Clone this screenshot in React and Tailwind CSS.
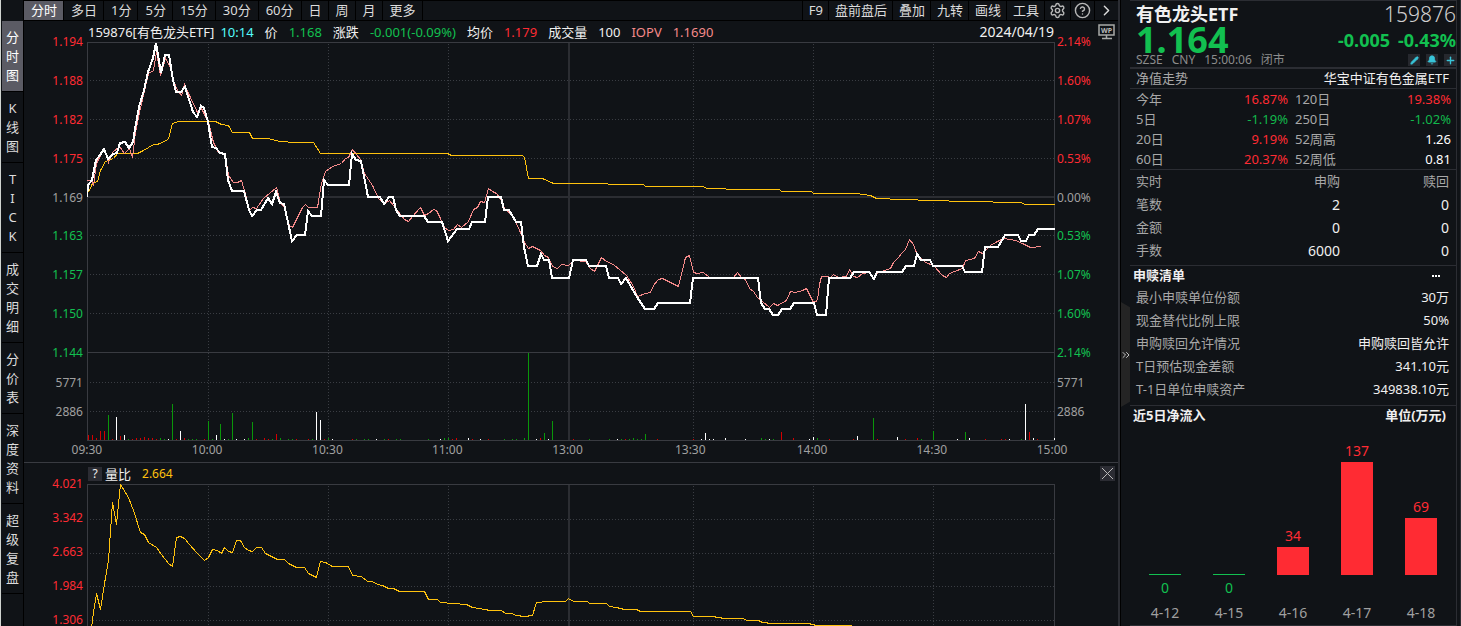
import React, { useState } from 'react'
import { Settings, CircleQuestionMark, ChevronRight, ChevronsRight, Pencil, Bell, Plus } from 'lucide-react'

const periods = ['分时', '多日', '1分', '5分', '15分', '30分', '60分', '日', '周', '月', '更多'];
const tools = ['F9', '盘前盘后', '叠加', '九转', '画线', '工具'];
const sideTabs = ['分时图', 'K线图', 'TICK', '成交明细', '分价表', '深度资料', '超级复盘'];

const priceTicks = ['1.194', '1.188', '1.182', '1.175', '1.169', '1.163', '1.157', '1.150', '1.144'];
const percentTicks = ['2.14%', '1.60%', '1.07%', '0.53%', '0.00%', '0.53%', '1.07%', '1.60%', '2.14%'];
const volumeTicks = ['5771', '2886'];
const ratioTicks = ['4.021', '3.342', '2.663', '1.984', '1.306'];
const times = ['09:30', '10:00', '10:30', '11:00', '13:00', '13:30', '14:00', '14:30', '15:00'];
const timeLines = [208, 328, 448, 693, 813, 933];

// 价格
const priceLine = '87,197 88,185 92,180 96,160 100,155 104,149 108,159 113,154 117,153 120,143 125,142 129,148 133,142 135,129 139,107 144,90 148,72 153,58 156,43 161,73 165,55 169,55 173,80 176,92 181,92 185,87 193,112 197,117 201,106 204,108 208,122 212,147 216,148 220,153 225,154 228,180 232,191 244,191 249,210 252,216 257,210 261,210 268,198 272,204 276,192 280,203 284,204 292,241 297,235 305,235 308,211 312,216 321,216 324,180 328,185 349,185 352,154 356,160 361,161 368,197 380,197 384,204 389,197 393,197 396,210 400,216 424,216 428,222 442,222 448,241 457,229 469,229 472,222 485,222 488,197 501,197 504,210 509,210 516,222 521,222 524,247 528,266 537,266 541,254 544,260 549,260 552,278 569,278 573,260 586,260 589,266 606,266 609,278 618,278 621,284 626,278 637,297 645,309 654,309 658,303 690,303 693,278 758,278 761,303 765,309 769,309 773,315 778,315 782,309 790,309 794,303 814,303 817,315 826,315 829,278 850,278 854,272 869,272 874,279 877,272 902,272 906,266 914,266 917,254 921,260 930,260 933,266 962,266 965,272 982,272 985,247 998,247 1005,235 1018,235 1021,241 1026,241 1029,235 1034,235 1038,229 1055,229';
// 均价
const averageLine = '88,192 92,183 97,181 100,170 105,161 113,158 117,153 137,153 143,150 153,144 157,144 168,139 172,123 178,121 215,121 221,124 228,125 232,132 249,132 252,138 267,138 280,141 295,142 313,142 320,153 447,153 451,155 522,155 524,157 528,178 542,178 553,183 571,183 643,184 645,186 703,186 706,188 744,189 779,189 781,191 811,191 813,193 856,193 870,195 876,198 903,199 932,200 964,201 1020,202 1025,204 1055,204';
// IOPV
const iopvLine = '87,180 92,181 93,185 96,163 100,155 104,149 108,162 112,152 119,146 124,153 129,148 132,157 135,132 139,112 148,73 153,70 156,52 160,75 165,58 169,65 173,80 177,90 181,95 184,84 189,95 197,112 201,108 208,122 213,142 218,152 225,155 228,175 233,182 237,182 241,180 244,190 249,210 252,207 256,208 263,198 276,187 280,202 284,207 289,225 292,227 302,207 305,204 308,207 317,207 321,183 325,171 332,166 341,163 345,158 348,157 352,149 360,159 364,173 372,185 378,198 384,203 389,200 397,210 404,219 408,221 412,216 420,207 424,215 428,213 433,209 436,210 440,218 444,227 448,230 453,229 457,224 461,227 468,221 473,209 477,207 480,201 484,202 488,188 492,191 496,193 501,200 504,208 512,215 520,232 524,242 528,248 532,246 540,250 544,255 548,257 552,266 557,268 561,264 568,265 573,260 585,261 590,268 594,271 601,257 606,261 613,264 626,275 633,286 637,296 645,293 650,292 653,285 658,279 662,278 678,286 685,257 689,255 693,272 697,273 703,272 709,277 733,277 737,272 741,277 745,279 749,288 753,291 757,297 762,301 769,307 773,303 777,305 786,300 790,291 795,292 802,290 806,288 813,302 817,300 819,284 821,276 827,276 830,277 833,274 838,277 846,276 849,269 853,276 857,277 862,273 869,272 873,277 878,272 890,268 893,262 897,258 902,252 905,249 909,239 913,244 917,255 925,262 933,265 942,275 946,277 949,273 962,268 965,260 974,258 978,251 982,253 990,245 997,241 1003,238 1015,240 1022,243 1030,247 1041,246';
// 量比
const ratioLine = '91,628 93,612 96,593 100,609 104,583 108,560 112,502 116,524 120,484 128,497 133,510 140,532 144,534 148,542 156,547 161,554 168,563 172,566 176,537 180,536 184,538 189,544 197,553 204,560 208,557 212,549 217,550 221,553 224,547 228,551 232,552 236,540 240,540 244,547 248,550 252,551 256,547 261,547 265,553 277,559 284,559 288,563 296,567 304,567 308,573 316,577 320,561 325,562 332,566 348,566 352,575 361,576 367,581 372,581 377,584 382,585 388,588 393,588 399,591 424,591 428,599 437,599 440,602 466,604 472,607 485,609 489,610 501,610 505,613 511,613 516,615 524,616 532,615 536,602 547,601 565,601 568,598 573,601 587,601 589,603 606,603 609,606 616,607 624,609 636,609 640,611 690,611 693,616 712,616 724,618 743,618 746,620 758,620 762,622 772,623 808,623 816,625 851,625';

// 成交量：位置, 高度
const volumes = {
    red: [[88, 5], [92, 5], [96, 2], [100, 9], [104, 9], [112, 1], [120, 4], [132, 1], [136, 2], [140, 2], [144, 3], [148, 2], [152, 2], [156, 1], [176, 1], [184, 2], [204, 1], [256, 1], [264, 2], [268, 1], [276, 6], [296, 1], [308, 1], [324, 1], [352, 1], [388, 1], [452, 1], [456, 2], [472, 1], [488, 1], [540, 2], [573, 1], [625, 1], [657, 1], [693, 1], [781, 8], [793, 2], [829, 1], [853, 1], [877, 1], [905, 1], [917, 2], [985, 1], [1001, 1], [1005, 1], [1029, 8], [1037, 1]],
    green: [[108, 25], [128, 1], [160, 2], [164, 1], [172, 36], [188, 1], [192, 1], [196, 1], [208, 19], [212, 1], [220, 16], [228, 1], [232, 27], [248, 2], [252, 18], [272, 1], [280, 2], [288, 1], [292, 1], [312, 1], [328, 2], [356, 1], [364, 1], [368, 1], [384, 1], [396, 1], [400, 1], [428, 1], [444, 2], [448, 2], [504, 1], [512, 1], [516, 1], [524, 2], [528, 87], [544, 7], [552, 19], [589, 1], [609, 1], [621, 1], [629, 1], [633, 2], [637, 1], [641, 1], [645, 6], [761, 2], [765, 1], [773, 1], [817, 2], [873, 22], [921, 1], [933, 9], [965, 8], [1021, 1]],
    white: [[116, 23], [124, 5], [168, 1], [180, 9], [216, 5], [224, 1], [236, 1], [244, 1], [316, 28], [320, 20], [332, 1], [376, 1], [440, 1], [468, 2], [480, 1], [536, 1], [548, 1], [617, 1], [701, 1], [705, 7], [709, 1], [713, 1], [725, 2], [745, 1], [769, 1], [809, 1], [813, 3], [857, 4], [897, 3], [957, 1], [969, 2], [1009, 1], [1025, 36], [1033, 2], [1054, 2]],
};
const volumeColors = { red: '#d40000', green: '#0a960a', white: '#ffffff' };

const trends = [
    ['今年', '16.87%', 'text-[#ff2b33]', '120日', '19.38%', 'text-[#ff2b33]'],
    ['5日', '-1.19%', 'text-[#12b84c]', '250日', '-1.02%', 'text-[#12b84c]'],
    ['20日', '9.19%', 'text-[#ff2b33]', '52周高', '1.26', 'text-white'],
    ['60日', '20.37%', 'text-[#ff2b33]', '52周低', '0.81', 'text-white'],
];
const realtime = [['笔数', '2', '0'], ['金额', '0', '0'], ['手数', '6000', '0']];
const redeemList = [
    ['最小申赎单位份额', '30万'],
    ['现金替代比例上限', '50%'],
    ['申购赎回允许情况', '申购赎回皆允许'],
    ['T日预估现金差额', '341.10元'],
    ['T-1日单位申赎资产', '349838.10元'],
];
const inflows = [
    { date: '4-12', value: 0 },
    { date: '4-15', value: 0 },
    { date: '4-16', value: 34 },
    { date: '4-17', value: 137 },
    { date: '4-18', value: 69 },
];

const tickColor = (i) => (i < 4 ? 'text-[#ff2b33]' : i === 4 ? 'text-[#a0a0a0]' : 'text-[#12c050]');

function TickColumn({ ticks, align }) {
    return (
        <div className={`-mt-2 w-[63px] shrink-0 text-xs leading-4 ${align}`}>
            <ul className="flex h-[327px] flex-col justify-between">
                {ticks.map((t, i) => <li key={i} className={tickColor(i)}>{t}</li>)}
            </ul>
            <ul className="flex flex-col gap-[13px] pt-3.5 text-[#a0a0a0]">
                {volumeTicks.map((t) => <li key={t}>{t}</li>)}
            </ul>
        </div>
    )
}

function Grid({ top, bottom, rows }) {
    return (
        <>
            <g stroke="#3a3d43" strokeDasharray="1 2">
                {rows.map((y) => <line key={y} x1="89.5" x2="1054" y1={y} y2={y} />)}
                {timeLines.map((x) => <line key={x} x1={x} x2={x} y1={top + 1.5} y2={bottom} />)}
            </g>
            <rect x="567.5" y={top} width="2" height={bottom - top} fill="#2b2d32" stroke="none" />
        </>
    )
}

function PriceChart() {
    return (
        <svg viewBox="87 42 968 399" preserveAspectRatio="none" className="h-[399px] min-w-0 flex-1" fill="none" shapeRendering="crispEdges" role="img" aria-label="分时">
            <g transform="translate(0.5 0.5)">
                <Grid top={42} bottom={440} rows={[80, 119, 158, 235, 274, 313, 382, 411]} />
                <line x1="87" x2="1054" y1="196.5" y2="196.5" stroke="#2b2d32" strokeWidth="2" />
                <path d="M87 352H1054M87 42H1054V440H87Z" stroke="#393b41" />
                {Object.keys(volumes).map((color) => (
                    <g key={color} stroke={volumeColors[color]}>
                        {volumes[color].map(([x, h]) => <line key={x} x1={x} x2={x} y1={439.5 - h} y2="439.5" />)}
                    </g>
                ))}
                <polyline points={averageLine} stroke="#ffc20e" />
                <polyline points={iopvLine} stroke="#f58a8a" />
            </g>
            <polyline points={priceLine} stroke="#ffffff" strokeWidth="2" />
        </svg>
    )
}

function RatioChart() {
    return (
        <svg viewBox="87 484 968 142" preserveAspectRatio="none" className="h-[142px] min-w-0 flex-1" fill="none" shapeRendering="crispEdges" role="img" aria-label="量比">
            <g transform="translate(0.5 0.5)">
                <Grid top={484} bottom={626} rows={[519, 553, 586, 620]} />
                <path d="M87 628V484H1054V628" stroke="#393b41" />
                <polyline points={ratioLine} stroke="#ffc20e" />
            </g>
        </svg>
    )
}

function TopBar({ period, setPeriod }) {
    return (
        <header className="flex h-[21px] items-stretch justify-between border-y border-black text-[13px] leading-[19px] text-[#dcdcdc]">
            <nav className="flex">
                {periods.map((p) => (
                    <button
                        key={p}
                        onClick={() => setPeriod(p)}
                        className={`border-r border-black pl-[7px] ${p.length > 2 ? 'pr-[7px]' : 'pr-1.5'} ${p === period ? 'bg-[#5b5b64] text-white' : ''}`}
                    >
                        {p}
                    </button>
                ))}
            </nav>
            <div className="flex">
                {tools.map((t, i) => (
                    <button key={t} className={`border-r border-black pr-[5px] pl-1.5 ${i === 0 ? 'border-l' : ''}`}>{t}</button>
                ))}
                <button aria-label="设置" className="border-r border-black px-1 text-[#b8b8b8]"><Settings size={17} strokeWidth={2} /></button>
                <button aria-label="帮助" className="border-r border-black px-[3px] text-[#b8b8b8]"><CircleQuestionMark size={17} strokeWidth={2} /></button>
                <button aria-label="展开" className="px-[3px]"><ChevronRight size={17} strokeWidth={2} /></button>
            </div>
        </header>
    )
}

function ChartHeader() {
    return (
        <div className="flex h-[21px] items-center pl-16 text-[13px] leading-5 whitespace-nowrap text-[#f0f0f0]">
            <span>159876[有色龙头ETF]</span>
            <div className="ml-1.5 flex gap-[11px]">
                <span className="text-[#54fcfc]">10:14</span>
                <span>价</span>
                <span className="text-[#12c050]">1.168</span>
                <span>涨跌</span>
                <span className="text-[#12c050]">-0.001(-0.09%)</span>
                <span>均价</span>
                <span className="text-[#ff2b33]">1.179</span>
                <span>成交量</span>
                <span>100</span>
                <span className="text-[#f58a8a]">IOPV</span>
                <span className="text-[#f58a8a]">1.1690</span>
            </div>
            <span className="ml-auto text-sm leading-5">2024/04/19</span>
            <button aria-label="WP" className="mr-0.5 ml-11">
                <svg width="18" height="16" viewBox="0 0 18 16" fill="none" stroke="#a8aaa8">
                    <rect x="1" y="1" width="15" height="10" strokeWidth="1.5" />
                    <path d="M8.5 11v3M4 14.5h10" strokeWidth="1.5" />
                    <text x="8.5" y="9" textAnchor="middle" fontSize="7" fontWeight="700" fill="#b8bab8" stroke="none">WP</text>
                </svg>
            </button>
        </div>
    )
}

function QuoteHeader() {
    return (
        <div className="border-b-2 border-[#2b2d33] pl-1.5">
            <div className="flex h-[25px] items-center justify-between">
                <h1 className="text-lg leading-6 font-bold text-[#f0f0f0]">有色龙头ETF</h1>
                <span className="text-[21px] leading-6 font-light text-[#d0d0d0]">159876</span>
            </div>
            <div className="flex h-[27px] items-center justify-between font-bold text-[#12c050]">
                <span className="text-4xl leading-7">1.164</span>
                <div className="flex gap-2 text-lg leading-6">
                    <span>-0.005</span>
                    <span>-0.43%</span>
                </div>
            </div>
            <div className="flex h-3.5 items-center justify-between text-xs leading-3 text-[#8c8c8c]">
                <div className="flex gap-[9px]">
                    <span>SZSE</span>
                    <span>CNY</span>
                    <span>15:00:06</span>
                    <span>闭市</span>
                </div>
                <div className="flex gap-1.5 text-[#38c4d8]">
                    <button aria-label="编辑" className="flex size-3 items-center justify-center bg-[#26282e]"><Pencil size={9} fill="currentColor" /></button>
                    <button aria-label="提醒" className="flex size-3 items-center justify-center bg-[#26282e]"><Bell size={10} fill="currentColor" /></button>
                    <button aria-label="添加" className="flex size-3 items-center justify-center bg-[#26282e]"><Plus size={11} strokeWidth={3} /></button>
                </div>
            </div>
        </div>
    )
}

function InflowChart() {
    return (
        <section>
            <div className="flex h-5 items-center justify-between pr-2.5 pl-[3px] text-[13px] font-bold text-[#f0f0f0]">
                <h2>近5日净流入</h2>
                <span>单位(万元)</span>
            </div>
            <div className="grid grid-cols-5 border-b border-[#2b2d33] px-[3px] text-center text-sm">
                {inflows.map(({ date, value }) => (
                    <div key={date}>
                        <div className="flex h-[149px] flex-col items-center justify-end">
                            {value > 0 && <span className="leading-[22px] text-[#ff2b33]">{value}</span>}
                            <div
                                className={`w-8 ${value > 0 ? 'bg-[#ff2b33]' : 'bg-[#12c050]'}`}
                                style={{ height: Math.max(1, Math.round(value * 0.825)) }}
                            />
                        </div>
                        <div className="h-[26px] leading-[26px] text-[#12c050]">{value === 0 && value}</div>
                        <div className="leading-6 text-[#a0a0a0]">{date}</div>
                    </div>
                ))}
            </div>
        </section>
    )
}

function QuotePanel() {
    return (
        <aside className="flex w-[343px] shrink-0 border-l-2 border-[#2b2d33]">
            <div className="w-2.5 shrink-0 border-l border-black">
                <button aria-label="收起" className="mt-[302px] flex h-[105px] w-full items-center justify-center bg-[#242424] text-[#c0c0c0] [clip-path:polygon(0_0,100%_5%,100%_95%,0_100%)]">
                    <ChevronsRight size={12} className="shrink-0" />
                </button>
            </div>
            <div className="min-w-0 flex-1 border-t border-[#2b2d33] text-[13px] text-[#a8a8a8]">
                <QuoteHeader />
                <div className="flex h-5 items-center justify-between border-b border-[#2b2d33] pr-[7px] pl-1.5">
                    <h2>净值走势</h2>
                    <span className="text-[#f0f0f0]">华宝中证有色金属ETF</span>
                </div>
                <table className="w-full border-b border-[#2b2d33] leading-5">
                    <tbody>
                        {trends.map(([a, av, ac, b, bv, bc]) => (
                            <tr key={a} className="h-5">
                                <th className="p-0 pl-1.5 text-left font-normal">{a}</th>
                                <td className={`p-0 text-right ${ac}`}>{av}</td>
                                <th className="w-[72px] p-0 pl-[7px] text-left font-normal">{b}</th>
                                <td className={`w-24 p-0 pr-[5px] text-right ${bc}`}>{bv}</td>
                            </tr>
                        ))}
                    </tbody>
                </table>
                <div className="border-b border-[#2b2d33] pb-[3px]">
                    <table className="w-full leading-[23px]">
                        <thead>
                            <tr>
                                <th className="p-0 pl-1.5 text-left font-normal">实时</th>
                                <th className="p-0 text-right font-normal">申购</th>
                                <th className="w-[116px] p-0 pr-[7px] text-right font-normal">赎回</th>
                            </tr>
                        </thead>
                        <tbody>
                            {realtime.map(([name, buy, sell]) => (
                                <tr key={name}>
                                    <th className="p-0 pl-1.5 text-left font-normal">{name}</th>
                                    <td className="p-0 text-right text-sm leading-[23px] text-[#f0f0f0]">{buy}</td>
                                    <td className="p-0 pr-[7px] text-right text-sm leading-[23px] text-[#f0f0f0]">{sell}</td>
                                </tr>
                            ))}
                        </tbody>
                    </table>
                </div>
                <section className="border-b border-[#2b2d33] pb-1">
                    <div className="flex h-5 items-center justify-between pr-4 pl-[3px] font-bold text-[#f0f0f0]">
                        <h2>申赎清单</h2>
                        <button aria-label="更多" className="flex gap-px">
                            <i className="size-0.5 bg-white" />
                            <i className="size-0.5 bg-white" />
                            <i className="size-0.5 bg-white" />
                        </button>
                    </div>
                    <dl className="pr-[7px] pl-1.5 leading-[23px]">
                        {redeemList.map(([name, value]) => (
                            <div key={name} className="flex justify-between">
                                <dt>{name}</dt>
                                <dd className="text-[#f0f0f0]">{value}</dd>
                            </div>
                        ))}
                    </dl>
                </section>
                <InflowChart />
            </div>
            <div className="w-[5px] shrink-0 border-x border-[#2b2d33]" />
        </aside>
    )
}

export default function App() {
    const [period, setPeriod] = useState('分时');
    const [tab, setTab] = useState('分时图');
    const [showRatio, setShowRatio] = useState(true);

    return (
        <div className="flex h-screen overflow-hidden bg-[#101317] font-['Noto_Sans','Noto_Sans_CJK_SC',sans-serif]">
            <nav className="flex w-6 shrink-0 flex-col border-r border-l border-r-black border-l-[#d0d4d0] pt-[21px] pl-px">
                {sideTabs.map((name) => (
                    <button
                        key={name}
                        onClick={() => setTab(name)}
                        className={`flex flex-col items-center border-b border-black pt-[7px] pb-1.5 text-[13px] leading-[19px] ${name === tab ? 'bg-[#5b5b64] text-white' : 'text-[#dcdcdc]'}`}
                    >
                        {name.split('').map((c, i) => <span key={i}>{c}</span>)}
                    </button>
                ))}
            </nav>

            <main className="min-w-0 flex-1">
                <TopBar period={period} setPeriod={setPeriod} />
                <ChartHeader />
                <div className="flex h-[399px]">
                    <TickColumn ticks={priceTicks} align="pr-1 text-right" />
                    <PriceChart />
                    <TickColumn ticks={percentTicks} align="pl-0.5 text-left" />
                </div>
                <ol className="grid h-[21px] grid-cols-[120fr_121fr_120fr_120fr_121fr_125fr_119fr_121fr_120fr] pr-1.5 pl-[3px] text-center text-xs leading-[18px] text-[#a0a0a0]">
                    {times.map((t) => <li key={t}>{t}</li>)}
                </ol>

                {showRatio && (
                    <section className="overflow-hidden border-t border-[#393b41]">
                        <div className="flex h-[21px] items-center pr-[3px] pl-16 text-[13px] leading-5 text-[#f0f0f0]">
                            <button aria-label="说明" className="size-3.5 bg-[#2b2c33] text-xs leading-[14px]">?</button>
                            <span className="ml-[3px]">量比</span>
                            <span className="ml-[11px] text-xs text-[#ffc20e]">2.664</span>
                            <button aria-label="关闭" onClick={() => setShowRatio(false)} className="ml-auto bg-[#2b2c33]">
                                <svg width="15" height="15" viewBox="0 0 15 15" stroke="#b8b8b8">
                                    <path d="M2 2l11 11M13 2L2 13" />
                                </svg>
                            </button>
                        </div>
                        <div className="flex h-[142px]">
                            <ul className="-mt-1.5 flex h-[148px] w-[63px] shrink-0 flex-col justify-between pr-1 text-right text-xs leading-3 text-[#ff2b33]">
                                {ratioTicks.map((t) => <li key={t}>{t}</li>)}
                            </ul>
                            <RatioChart />
                            <div className="w-[63px] shrink-0" />
                        </div>
                    </section>
                )}
            </main>

            <QuotePanel />
        </div>
    )
}
